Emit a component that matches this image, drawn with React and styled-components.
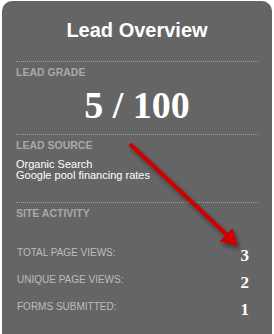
import React from "react";
import styled, { createGlobalStyle } from "styled-components";

const GlobalStyle = createGlobalStyle`
  html, body {
    margin: 0;
    padding: 0;
    background: #fff;
    overflow: hidden;
  }
`;

const Card = styled.div`
  position: relative;
  margin: 1px 0 0 2px;
  width: 270px;
  min-height: 350px;
  box-sizing: border-box;
  padding: 18px 14px 0 14px;
  background: #656565;
  border-radius: 10px 10px 0 0;
  font-family: "Liberation Sans", Arial, sans-serif;
`;

const Title = styled.h1`
  margin: 0 0 19px;
  font-size: 20px;
  line-height: 23px;
  font-weight: bold;
  color: #fff;
  text-align: center;
`;

const Section = styled.section`
  border-top: 1px dotted #9c9c9c;
  padding: 4px 0 ${(p) => p.$bottom || 0}px;
`;

const Heading = styled.h2`
  margin: 0;
  font-size: 10.5px;
  line-height: 12px;
  font-weight: bold;
  color: #a8a8a8;
  text-transform: uppercase;
`;

const Grade = styled.div`
  margin-top: 8px;
  font-family: "Liberation Serif", "Times New Roman", serif;
  font-weight: bold;
  font-size: 38px;
  line-height: 38px;
  color: #fff;
  text-align: center;
`;

const Source = styled.div`
  margin-top: 8px;
  font-size: 11px;
  line-height: 11px;
  color: #fff;
`;

const Stats = styled.div`
  display: flex;
  flex-direction: column;
  gap: 10px;
  margin-top: 28px;
  padding: 0 9px 0 1px;
`;

const Row = styled.div`
  display: flex;
  align-items: flex-start;
  justify-content: space-between;
`;

const Label = styled.span`
  font-size: 10px;
  line-height: 12px;
  color: #bcbcbc;
  text-transform: uppercase;
`;

const Value = styled.span`
  font-family: "Liberation Serif", "Times New Roman", serif;
  font-weight: bold;
  font-size: 17px;
  line-height: 17px;
  color: #fff;
`;

const ArrowLayer = styled.svg`
  position: absolute;
  left: 0;
  top: 0;
  width: 270px;
  height: 333px;
  pointer-events: none;
  overflow: visible;
`;

const stats = [
  { label: "Total page views:", value: 3 },
  { label: "Unique page views:", value: 2 },
  { label: "Forms submitted:", value: 1 },
];

function Arrow() {
  return (
    <ArrowLayer viewBox="0 0 270 333">
      <defs>
        <filter id="shadow" x="-20%" y="-20%" width="140%" height="140%">
          <feDropShadow dx="2" dy="3" stdDeviation="2" floodColor="#000" floodOpacity="0.45" />
        </filter>
      </defs>
      <g filter="url(#shadow)">
        <line x1="129" y1="144" x2="224" y2="233" stroke="#cc0000" strokeWidth="4" strokeLinecap="round" />
        <polygon points="236,245 217.5,240.5 230.5,227" fill="#cc0000" />
      </g>
    </ArrowLayer>
  );
}

export default function App() {
  return (
    <>
      <GlobalStyle />
      <Card>
        <Title>Lead Overview</Title>
        <Section $bottom={10}>
          <Heading>Lead Grade</Heading>
          <Grade>5 / 100</Grade>
        </Section>
        <Section $bottom={21}>
          <Heading>Lead Source</Heading>
          <Source>
            Organic Search
            <br />
            Google pool financing rates
          </Source>
        </Section>
        <Section>
          <Heading>Site Activity</Heading>
          <Stats>
            {stats.map((s) => (
              <Row key={s.label}>
                <Label>{s.label}</Label>
                <Value>{s.value}</Value>
              </Row>
            ))}
          </Stats>
        </Section>
        <Arrow />
      </Card>
    </>
  );
}
